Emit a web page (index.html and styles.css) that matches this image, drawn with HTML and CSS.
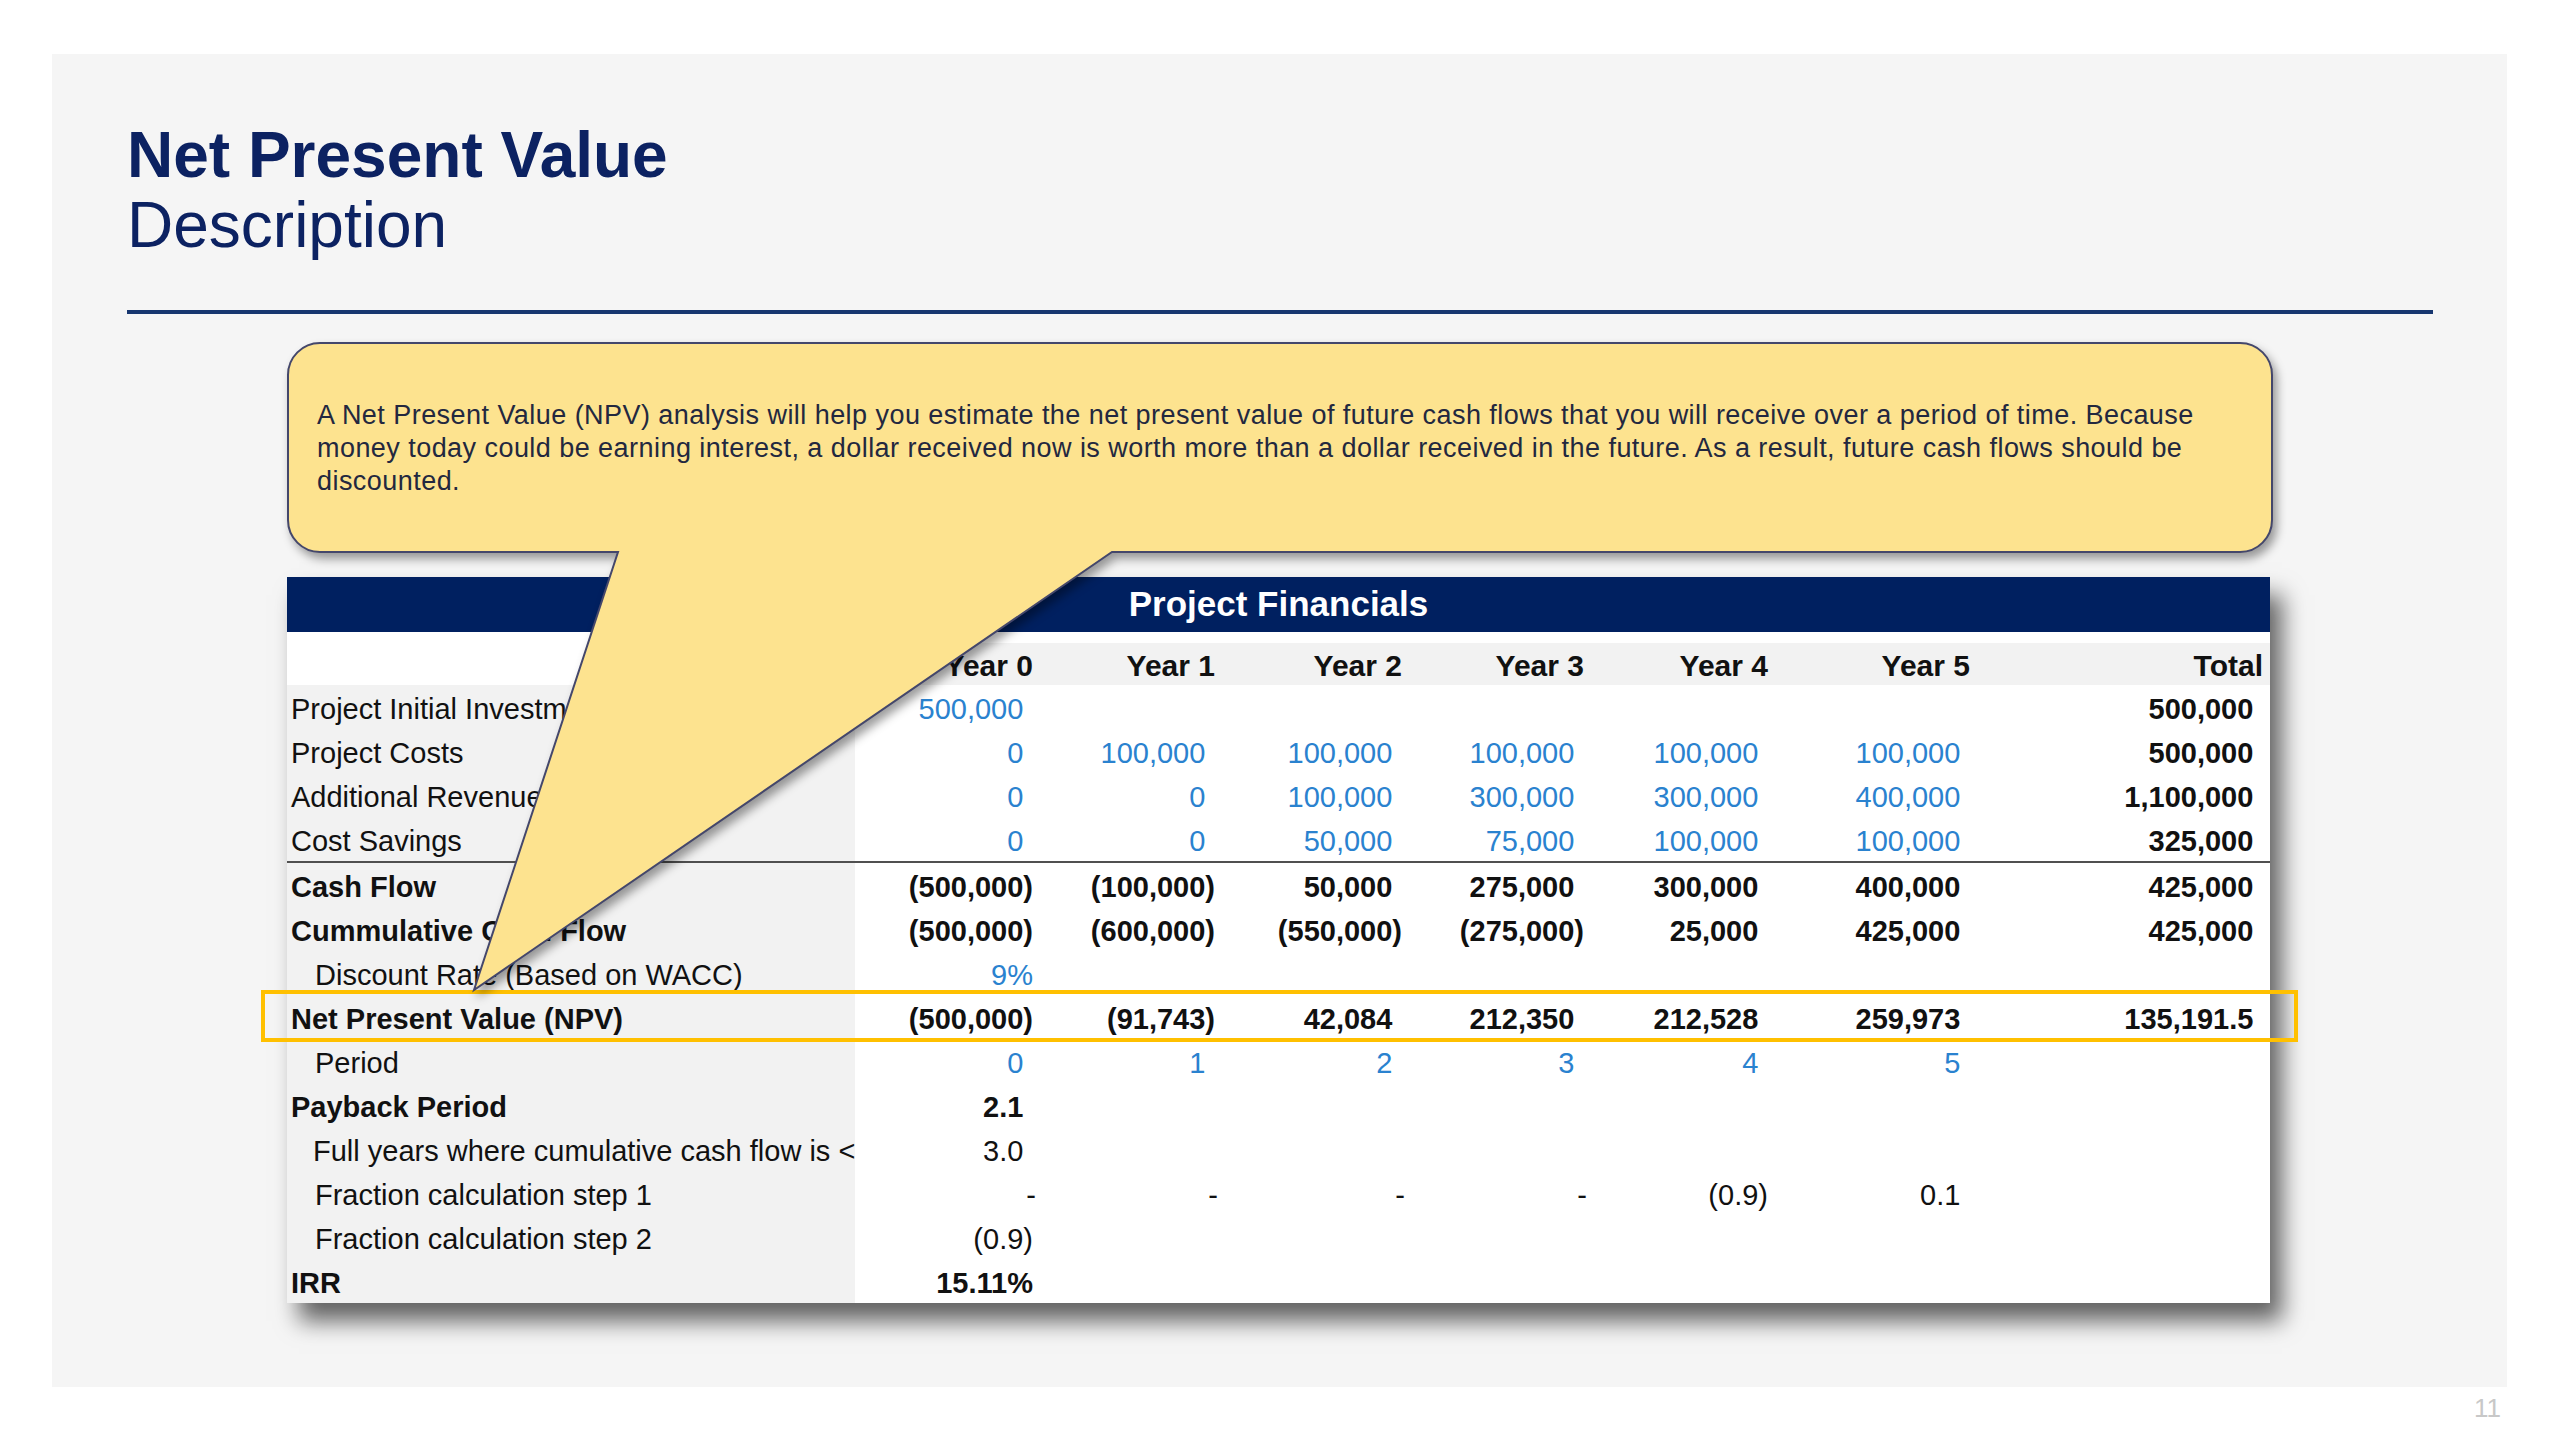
FILE: index.html
```html
<!DOCTYPE html>
<html lang="en">
<head>
<meta charset="utf-8">
<title>Net Present Value</title>
<link rel="stylesheet" href="styles.css">
</head>
<body>
<div class="slide">
  <h1 class="title">Net Present Value</h1>
  <h2 class="subtitle">Description</h2>
  <div class="rule"></div>
  <div class="content">
    <div class="callout">
      <svg class="callout-shape" width="1986" height="660" viewBox="0 0 1986 660" aria-hidden="true">
        <path d="M 33 1 H 1953 A 32 32 0 0 1 1985 33 V 178 A 32 32 0 0 1 1953 210 H 825 L 187 648 L 331 210 H 33 A 32 32 0 0 1 1 178 V 33 A 32 32 0 0 1 33 1 Z" fill="#fde38f" stroke="#44476b" stroke-width="2" stroke-linejoin="miter"/>
      </svg>
      <p class="callout-text">A Net Present Value (NPV) analysis will help you estimate the net present value of future cash flows that you will receive over a period of time. Because<br>money today could be earning interest, a dollar received now is worth more than a dollar received in the future. As a result, future cash flows should be<br>discounted.</p>
    </div>
    <div class="fin">
      <div class="fin-head">Project Financials</div>
      <div class="fin-gap"></div>
      <div class="row yr">
        <div class="l"></div><div class="c">Year 0</div><div class="c">Year 1</div><div class="c">Year 2</div><div class="c">Year 3</div><div class="c">Year 4</div><div class="c">Year 5</div><div class="c">Total</div>
      </div>
      <div class="row">
        <div class="l">Project Initial Investment</div><div class="c n blue">500,000</div><div class="c"></div><div class="c"></div><div class="c"></div><div class="c"></div><div class="c"></div><div class="c n b">500,000</div>
      </div>
      <div class="row">
        <div class="l">Project Costs</div><div class="c n blue">0</div><div class="c n blue">100,000</div><div class="c n blue">100,000</div><div class="c n blue">100,000</div><div class="c n blue">100,000</div><div class="c n blue">100,000</div><div class="c n b">500,000</div>
      </div>
      <div class="row">
        <div class="l">Additional Revenue</div><div class="c n blue">0</div><div class="c n blue">0</div><div class="c n blue">100,000</div><div class="c n blue">300,000</div><div class="c n blue">300,000</div><div class="c n blue">400,000</div><div class="c n b">1,100,000</div>
      </div>
      <div class="row sep">
        <div class="l">Cost Savings</div><div class="c n blue">0</div><div class="c n blue">0</div><div class="c n blue">50,000</div><div class="c n blue">75,000</div><div class="c n blue">100,000</div><div class="c n blue">100,000</div><div class="c n b">325,000</div>
      </div>
      <div class="row bold">
        <div class="l">Cash Flow</div><div class="c">(500,000)</div><div class="c">(100,000)</div><div class="c n">50,000</div><div class="c n">275,000</div><div class="c n">300,000</div><div class="c n">400,000</div><div class="c n">425,000</div>
      </div>
      <div class="row bold">
        <div class="l">Cummulative Cash Flow</div><div class="c">(500,000)</div><div class="c">(600,000)</div><div class="c">(550,000)</div><div class="c">(275,000)</div><div class="c n">25,000</div><div class="c n">425,000</div><div class="c n">425,000</div>
      </div>
      <div class="row">
        <div class="l ind">Discount Rate (Based on WACC)</div><div class="c blue">9%</div><div class="c"></div><div class="c"></div><div class="c"></div><div class="c"></div><div class="c"></div><div class="c"></div>
      </div>
      <div class="row bold">
        <div class="l">Net Present Value (NPV)</div><div class="c">(500,000)</div><div class="c">(91,743)</div><div class="c n">42,084</div><div class="c n">212,350</div><div class="c n">212,528</div><div class="c n">259,973</div><div class="c n">135,191.5</div>
      </div>
      <div class="row">
        <div class="l ind">Period</div><div class="c n blue">0</div><div class="c n blue">1</div><div class="c n blue">2</div><div class="c n blue">3</div><div class="c n blue">4</div><div class="c n blue">5</div><div class="c"></div>
      </div>
      <div class="row">
        <div class="l b">Payback Period</div><div class="c n b">2.1</div><div class="c"></div><div class="c"></div><div class="c"></div><div class="c"></div><div class="c"></div><div class="c"></div>
      </div>
      <div class="row">
        <div class="l ind wide">Full years where cumulative cash flow is &lt;</div><div class="c n">3.0</div><div class="c"></div><div class="c"></div><div class="c"></div><div class="c"></div><div class="c"></div><div class="c"></div>
      </div>
      <div class="row">
        <div class="l ind">Fraction calculation step 1</div><div class="c dash">-</div><div class="c dash">-</div><div class="c dash">-</div><div class="c dash">-</div><div class="c">(0.9)</div><div class="c n">0.1</div><div class="c"></div>
      </div>
      <div class="row">
        <div class="l ind">Fraction calculation step 2</div><div class="c">(0.9)</div><div class="c"></div><div class="c"></div><div class="c"></div><div class="c"></div><div class="c"></div><div class="c"></div>
      </div>
      <div class="row">
        <div class="l b">IRR</div><div class="c b">15.11%</div><div class="c"></div><div class="c"></div><div class="c"></div><div class="c"></div><div class="c"></div><div class="c"></div>
      </div>
      <div class="npv-highlight"></div>
    </div>
  </div>
</div>
<div class="pagenum">11</div>
</body>
</html>
```

FILE: styles.css
```css
html, body {
  margin: 0;
  padding: 0;
  background: #ffffff;
}

body {
  font-family: "Liberation Sans", Arial, Helvetica, sans-serif;
  color: #111111;
}

.slide {
  margin: 54px 0 0 52px;
  width: 2455px;
  height: 1333px;
  background: #f5f5f5;
  padding: 66px 0 0 75px;
  box-sizing: border-box;
}

.title {
  margin: 0;
  font-size: 64px;
  line-height: 70px;
  font-weight: bold;
  color: #0c2262;
}

.subtitle {
  margin: 0;
  font-size: 64px;
  line-height: 70px;
  font-weight: normal;
  color: #0c2262;
}

.rule {
  margin-top: 50px;
  width: 2306px;
  height: 4px;
  background: #17366f;
}

.content {
  margin-left: 160px;
}

/* Callout */
.callout {
  position: relative;
  z-index: 2;
  margin-top: 28px;
  width: 1986px;
  height: 211px;
}

.callout-shape {
  position: absolute;
  left: 0;
  top: 0;
  overflow: visible;
  pointer-events: none;
  filter: drop-shadow(4px 6px 5px rgba(0, 0, 0, 0.38));
}

.callout-text {
  position: relative;
  margin: 0;
  padding: 57px 0 0 30px;
  font-size: 27px;
  line-height: 33px;
  letter-spacing: 0.45px;
  color: #23283f;
  white-space: nowrap;
}

/* Financials table */
.fin {
  position: relative;
  z-index: 1;
  margin-top: 24px;
  width: 1983px;
  background: #ffffff;
  box-shadow: 12px 18px 22px rgba(0, 0, 0, 0.6);
}

.fin-head {
  height: 55px;
  line-height: 53px;
  background: #002060;
  color: #ffffff;
  font-size: 35px;
  font-weight: bold;
  text-align: center;
}

.fin-gap {
  height: 11px;
  background: #ffffff;
}

.row {
  display: grid;
  grid-template-columns: 568px 185px 182px 187px 182px 184px 202px 293px;
  font-size: 29px;
}

.row > div {
  height: 44px;
  box-sizing: border-box;
  padding-top: 5px;
  line-height: 39px;
  white-space: nowrap;
}

.row.sep {
  border-bottom: 2px solid #505050;
}

.l {
  background: #f2f2f2;
  padding-left: 4px;
  overflow: hidden;
  text-align: left;
}

.l.ind {
  padding-left: 28px;
}

.l.wide {
  overflow: visible;
  padding-left: 26px;
}

.c {
  text-align: right;
  padding-right: 7px;
}

.n::after {
  content: ")";
  visibility: hidden;
}

.dash {
  padding-right: 4px;
}

.blue {
  color: #2a82cf;
}

.b,
.bold > div {
  font-weight: bold;
}

.row.yr > div {
  height: 42px;
  padding-top: 3px;
  line-height: 39px;
  font-size: 30px;
  font-weight: bold;
  background: #f2f2f2;
}

.row.yr > .l {
  background: #ffffff;
}

.npv-highlight {
  position: absolute;
  left: -26px;
  top: 413px;
  width: 2037px;
  height: 52px;
  border: 4px solid #ffc000;
  box-sizing: border-box;
  pointer-events: none;
}

.pagenum {
  width: 2501px;
  margin-top: 8px;
  text-align: right;
  font-size: 26px;
  line-height: 26px;
  color: #c8c8c8;
}
```
